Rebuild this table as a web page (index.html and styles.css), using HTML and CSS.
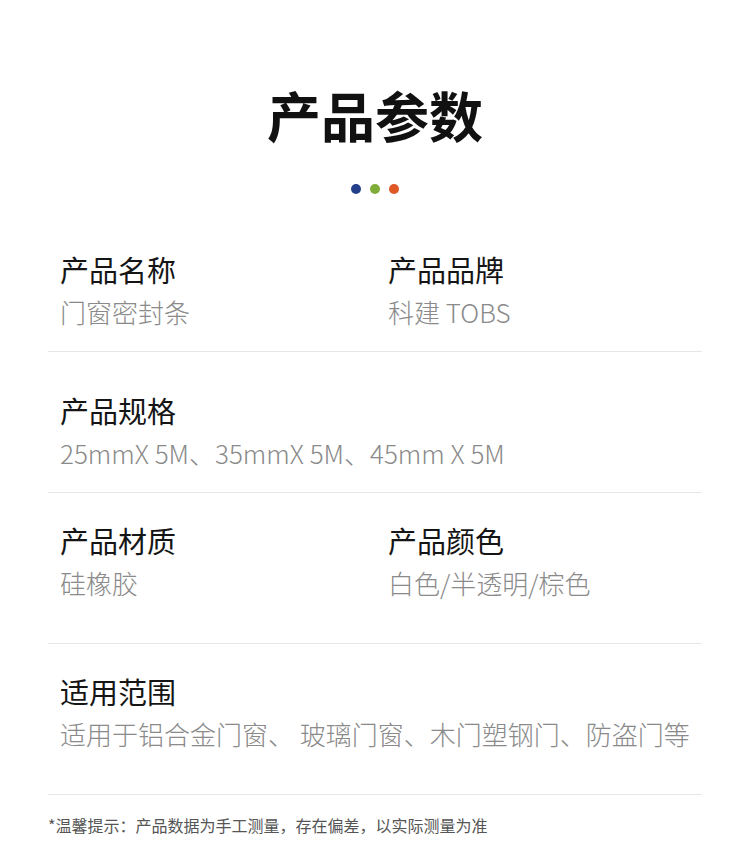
FILE: index.html
```html
<!DOCTYPE html>
<html lang="zh-CN">
<head>
<meta charset="utf-8">
<title>产品参数</title>
<link rel="stylesheet" href="styles.css">
</head>
<body>
<div class="page">
  <h1 class="title">产品参数</h1>
  <div class="dots">
    <span class="dot dot--blue"></span>
    <span class="dot dot--green"></span>
    <span class="dot dot--orange"></span>
  </div>

  <div class="row row--first">
    <div class="cell">
      <div class="label">产品名称</div>
      <div class="value">门窗密封条</div>
    </div>
    <div class="cell">
      <div class="label">产品品牌</div>
      <div class="value">科建 TOBS</div>
    </div>
  </div>

  <div class="row row--second">
    <div class="cell cell--wide">
      <div class="label">产品规格</div>
      <div class="value">25mmX 5M、35mmX 5M、45mm X 5M</div>
    </div>
  </div>

  <div class="row row--tall">
    <div class="cell">
      <div class="label">产品材质</div>
      <div class="value">硅橡胶</div>
    </div>
    <div class="cell">
      <div class="label">产品颜色</div>
      <div class="value">白色/半透明/棕色</div>
    </div>
  </div>

  <div class="row row--tall">
    <div class="cell cell--wide">
      <div class="label">适用范围</div>
      <div class="value">适用于铝合金门窗、 玻璃门窗、木门塑钢门、防盗门等</div>
    </div>
  </div>

  <p class="note">*温馨提示：产品数据为手工测量，存在偏差，以实际测量为准</p>
</div>
</body>
</html>
```

FILE: styles.css
```css
html, body {
  margin: 0;
  padding: 0;
  background: #ffffff;
}

body {
  font-family: "Noto Sans CJK SC", "Noto Sans", sans-serif;
  color: #111111;
}

.page {
  width: 654px;
  margin: 0 48px;
  padding-top: 85px;
}

.title {
  margin: 0;
  font-size: 54px;
  line-height: 60px;
  font-weight: 700;
  text-align: center;
  color: #111111;
}

.dots {
  display: flex;
  justify-content: center;
  gap: 9px;
  margin-top: 39px;
  height: 10px;
}

.dot {
  width: 10px;
  height: 10px;
  border-radius: 50%;
}

.dot--blue { background: #243f8c; }
.dot--green { background: #80ad3a; }
.dot--orange { background: #df5826; }

.row {
  display: grid;
  grid-template-columns: 328px 1fr;
  padding: 30px 0 22px 12px;
  border-bottom: 1px solid #e6e6e6;
}

.row--first {
  padding-top: 57px;
}

.row--second {
  padding-top: 40px;
}

.row--tall {
  padding-top: 29px;
  padding-bottom: 43px;
}

.cell--wide {
  grid-column: 1 / -1;
}

.label {
  font-size: 29px;
  line-height: 36px;
  color: #151515;
  white-space: nowrap;
}

.value {
  margin-top: 8px;
  font-size: 26px;
  line-height: 34px;
  font-weight: 300;
  color: #8a8a8a;
  white-space: nowrap;
}

.note {
  margin: 0;
  padding-top: 18px;
  font-size: 16px;
  line-height: 24px;
  color: #555555;
  white-space: nowrap;
}
```
